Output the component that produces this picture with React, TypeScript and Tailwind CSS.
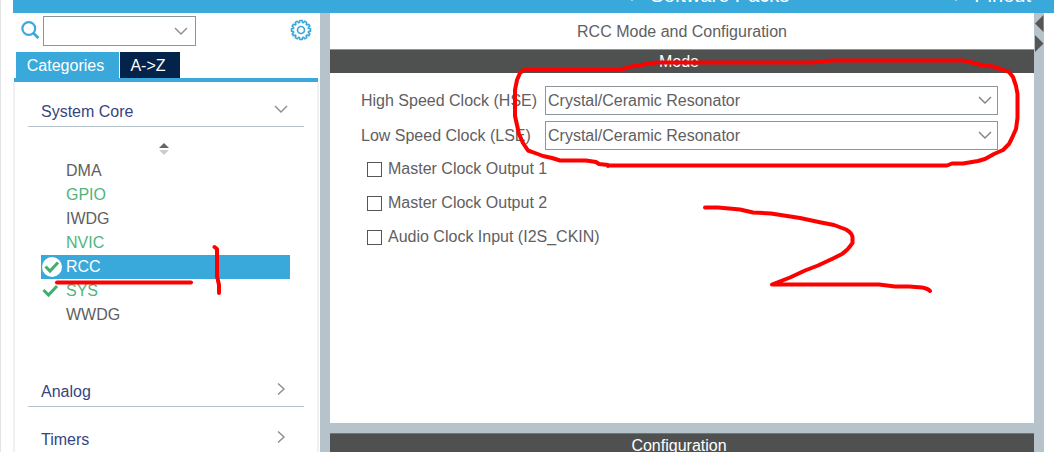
import { useState } from "react";

type Peripheral = { name: string; state: "idle" | "active" | "checked" };

const peripherals: Peripheral[] = [
  { name: "DMA", state: "idle" },
  { name: "GPIO", state: "active" },
  { name: "IWDG", state: "idle" },
  { name: "NVIC", state: "active" },
  { name: "RCC", state: "checked" },
  { name: "SYS", state: "checked" },
  { name: "WWDG", state: "idle" },
];

function Chevron({ className, right = false }: { className: string; right?: boolean }) {
  return (
    <svg
      className={className}
      width="14"
      height="14"
      viewBox="0 0 14 14"
      fill="none"
      stroke="currentColor"
      strokeWidth="1.4"
      aria-hidden="true"
    >
      <path d={right ? "M4 1.5 10 7 4 12.5" : "M1 4 7 10 13 4"} />
    </svg>
  );
}

function Gear() {
  const teeth = 12;
  const points: string[] = [];
  for (let i = 0; i < teeth; i++) {
    [
      [-0.2, 7.7],
      [-0.12, 9.6],
      [0.12, 9.6],
      [0.2, 7.7],
    ].forEach(([offset, r]) => {
      const a = (i * 2 * Math.PI) / teeth + offset;
      points.push(`${(11 + r * Math.sin(a)).toFixed(2)},${(11 - r * Math.cos(a)).toFixed(2)}`);
    });
  }
  return (
    <svg width="22" height="22" viewBox="0 0 22 22" fill="none" stroke="#39a9dc" aria-hidden="true">
      <polygon points={points.join(" ")} strokeWidth="1.6" strokeLinejoin="round" />
      <circle cx="11" cy="11" r="3.5" strokeWidth="1.7" />
    </svg>
  );
}

function Tick({ selected }: { selected: boolean }) {
  return (
    <svg width="22" height="22" viewBox="0 0 22 22" fill="none" aria-hidden="true">
      {selected && <circle cx="11" cy="11" r="10" fill="#fff" />}
      <path
        d={selected ? "M4.5 10.5 9 15 17 6.5" : "M2.500 10 7.5 15 16 6"}
        stroke="#41ad70"
        strokeWidth="3"
      />
    </svg>
  );
}

function Section({ title, open = false }: { title: string; open?: boolean }) {
  return (
    <button
      type="button"
      aria-expanded={open}
      className="flex h-8 items-center justify-between border-b border-[#b7c3ca] pt-[2px] pr-4 pl-[13px] text-[#36457f]"
    >
      <span>{title}</span>
      <Chevron className="mb-[6px] text-[#8c8c8c]" right={!open} />
    </button>
  );
}

function ClockSelect({ id, label }: { id: string; label: string }) {
  return (
    <div className="flex h-[29px] items-center">
      <label htmlFor={id} className="w-[184px] shrink-0 whitespace-nowrap">
        {label}
      </label>
      <div className="relative h-full flex-1">
        <select
          id={id}
          className="h-full w-full appearance-none border border-[#8d959b] bg-white pl-[2px] outline-none"
        >
          <option>Crystal/Ceramic Resonator</option>
          <option>BYPASS Clock Source</option>
          <option>Disable</option>
        </select>
        <Chevron className="pointer-events-none absolute top-[7px] right-[6px] text-[#808080]" />
      </div>
    </div>
  );
}

function Annotations() {
  return (
    <svg
      className="pointer-events-none absolute top-0 -left-px"
      width="1054"
      height="452"
      viewBox="0 0 1054 452"
      fill="none"
      stroke="#fe0000"
      strokeWidth="4"
      strokeLinecap="round"
      strokeLinejoin="round"
      aria-hidden="true"
    >
      <path d="M57 282.500H191" />
      <path d="M214.500 247 217 249V276L219 285V293" />
      <path d="M608 166V165L599 164 596 162 586 160.500H560L552 158 543 156 535 153 528 150.500 523 143 519 134 517 125 515 116V90L517 80 520 73 524 70H619L632 66.500 656 62.500H813L832 60.500H963L970 62 981 65 993 66.500 1001 69 1009 72 1013 77 1016 86 1017.500 94V118L1016 129 1012 138 1009 144 1003 150 994 154 985 159 978 161 963 163.500H952L947 165.500H608" />
      <path d="M705 207.500H718L740 209.500 753 212.500 771 213.500 800 218 821 222.500 834 225 846 229.500Q852 233 852.500 237V243Q848 250 842 254L833 258.500 818 265.500 805 270.500 790 277.500 772 284.500H879L895 286.500H909L922 287.500Q928 288.500 930 291" />
    </svg>
  );
}

export default function App() {
  const [selected, setSelected] = useState("RCC");

  return (
    <div className="relative flex h-screen flex-col overflow-hidden border-l border-[#e4e4e6] bg-white pl-3 font-['Liberation_Sans',Arial,sans-serif] text-base leading-5 text-[#5f6062]">
      <header className="flex h-[13px] shrink-0 items-end justify-end gap-[160px] bg-[#39a9dc] pr-[23px] text-xl leading-5 text-white">
        <button type="button" className="flex h-5 items-center gap-[11px]">
          <Chevron className="mb-3" />
          <span className="mb-4 whitespace-nowrap">Software Packs</span>
        </button>
        <button type="button" className="flex h-5 items-center gap-[11px]">
          <Chevron className="mb-3" />
          <span className="mb-4">Pinout</span>
        </button>
      </header>

      <div className="flex min-h-0 flex-1">
        <aside className="flex w-[307px] shrink-0 flex-col">
          <div className="flex h-[39px] shrink-0 items-start pt-[3px] pr-2 pl-2">
            <svg
              className="mt-[5px] mr-1 shrink-0"
              width="18"
              height="18"
              viewBox="0 0 18 18"
              fill="none"
              stroke="#39a9dc"
              strokeWidth="2.2"
              aria-hidden="true"
            >
              <circle cx="7.800" cy="7.500" r="6.400" />
              <path d="m12.300 12 5 5" strokeWidth="2.600" />
            </svg>
            <div className="relative h-[30px] w-[153px]">
              <input
                type="text"
                aria-label="Search"
                className="h-full w-full border border-[#8d959b] bg-white px-1 outline-none"
              />
              <Chevron className="pointer-events-none absolute top-2 right-2 text-[#8c8c8c]" />
            </div>
            <button type="button" aria-label="Settings" className="mt-[3px] ml-auto">
              <Gear />
            </button>
          </div>

          <div className="flex shrink-0 gap-px pl-[3px] text-white" role="tablist">
            <button type="button" role="tab" aria-selected="true" className="h-[26px] w-[103px] bg-[#39a9dc] pt-px pr-1">
              Categories
            </button>
            <button type="button" role="tab" aria-selected="false" className="h-[26px] w-[60px] bg-[#03234b] pt-px pr-1">
              A-&gt;Z
            </button>
          </div>

          <div className="mr-[2px] ml-px h-1 shrink-0 bg-[#39a9dc]" />

          <div className="mr-px flex flex-1 flex-col border-x-2 border-[#eff1f4] pt-[13px] pr-[13px] pl-[13px]">
            <Section title="System Core" open />
            <button type="button" aria-label="Sort" className="mx-auto mt-[15px] h-[14px] w-[14px]">
              <svg width="10" height="14" viewBox="0 0 10 14" aria-hidden="true">
                <path d="M0 6 5 1l5 5Z" fill="#666" />
                <path d="M0 8h10l-5 5Z" fill="#ccc" />
              </svg>
            </button>
            <ul className="mt-[3px] mr-[14px] ml-[13px]">
              {peripherals.map(({ name, state }) => {
                const isSelected = name === selected;
                return (
                  <li key={name}>
                    <button
                      type="button"
                      onClick={() => setSelected(name)}
                      className={`flex h-6 w-full items-center gap-[3px] ${
                        isSelected ? "bg-[#39a9dc] text-white" : state === "idle" ? "" : "text-[#4fb57d]"
                      }`}
                    >
                      <span className="flex w-[22px] shrink-0">
                        {state === "checked" && <Tick selected={isSelected} />}
                      </span>
                      <span>{name}</span>
                    </button>
                  </li>
                );
              })}
            </ul>
            <div className="mt-12 flex flex-col gap-4">
              <Section title="Analog" />
              <Section title="Timers" />
            </div>
          </div>
        </aside>

        <div className="w-[10px] shrink-0 bg-[#b7c3ca]" />

        <main className="flex min-w-0 flex-1 flex-col">
          <h1 className="flex h-9 shrink-0 items-center justify-center pt-px">RCC Mode and Configuration</h1>
          <section className="shrink-0">
            <h2 className="flex h-6 items-center justify-center border-t border-[#8d959b] bg-[#4f5150] pr-[6px] text-white">
              Mode
            </h2>
            <div className="flex min-h-[350px] flex-col gap-[6px] pt-[13px] pr-9 pl-[31px]">
              <ClockSelect id="hse" label="High Speed Clock (HSE)" />
              <ClockSelect id="lse" label="Low Speed Clock (LSE)" />
              <div className="mt-[3px] flex flex-col items-start gap-[14px] pl-[6px]">
                {["Master Clock Output 1", "Master Clock Output 2", "Audio Clock Input (I2S_CKIN)"].map((text) => (
                  <label key={text} className="flex items-center gap-[6px]">
                    <input
                      type="checkbox"
                      className="h-[15px] w-[15px] appearance-none border border-[#555] bg-white checked:bg-[#39a9dc]"
                    />
                    {text}
                  </label>
                ))}
              </div>
            </div>
          </section>
          <div className="h-[10px] shrink-0 bg-[#b7c3ca]" />
          <section className="flex-1">
            <h2 className="flex h-6 items-center justify-center border-t border-[#6f7679] bg-[#4f5150] pr-[6px] text-white">
              Configuration
            </h2>
          </section>
        </main>

        <div className="w-[10px] shrink-0 bg-[#b7c3ca]">
          <svg width="10" height="40" viewBox="0 0 10 40" fill="#555" aria-hidden="true">
            <path d="M9.500 2v17L1 10.500ZM1 22v17l8.500-8.500Z" />
          </svg>
        </div>
        <div className="w-[10px] shrink-0" />
      </div>

      <Annotations />
    </div>
  );
}
